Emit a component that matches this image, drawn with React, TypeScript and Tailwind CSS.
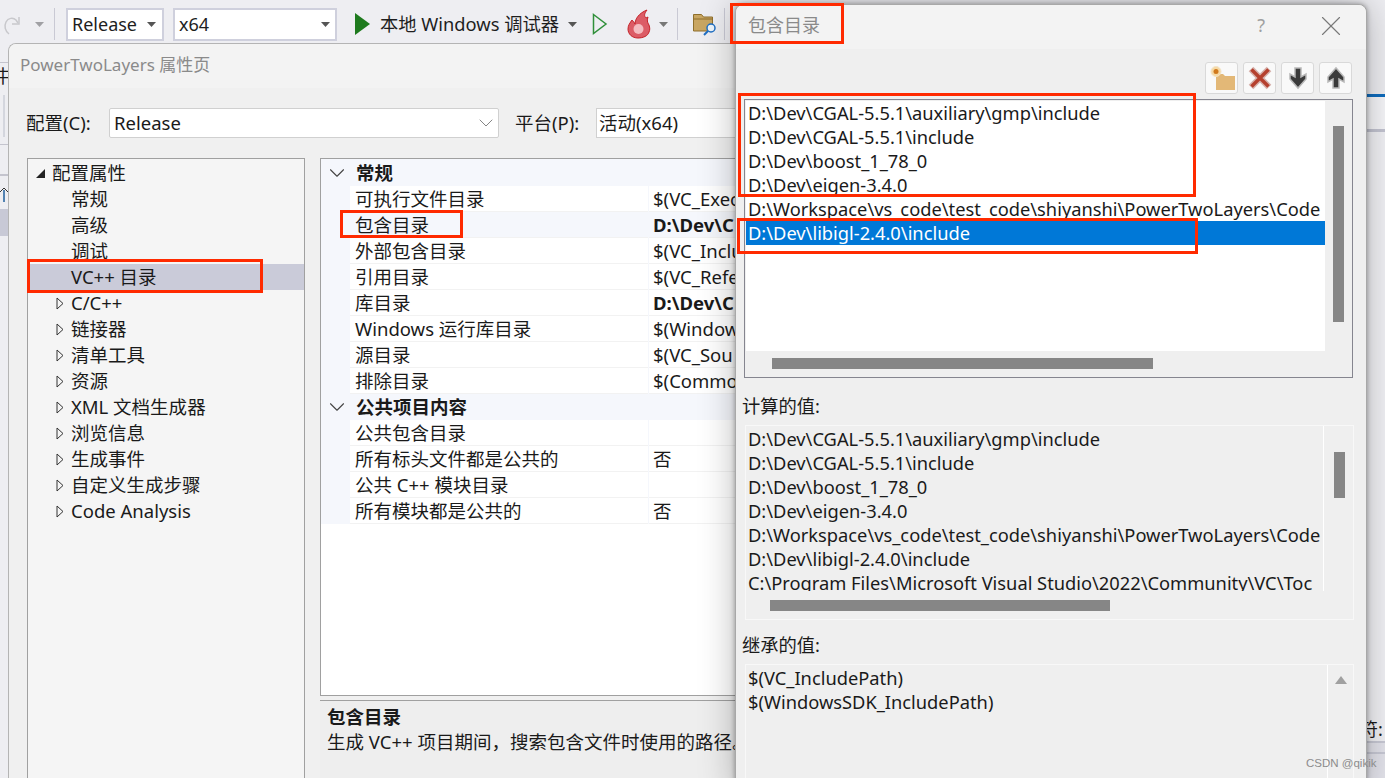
import { ChevronDown, X } from "lucide-react";

const FONT = "font-['Noto_Sans','Noto_Sans_CJK_SC',sans-serif]";

const treeItems = [
  { label: "配置属性", open: true },
  { label: "常规" },
  { label: "高级" },
  { label: "调试" },
  { label: "VC++ 目录", active: true },
  { label: "C/C++", closed: true },
  { label: "链接器", closed: true },
  { label: "清单工具", closed: true },
  { label: "资源", closed: true },
  { label: "XML 文档生成器", closed: true },
  { label: "浏览信息", closed: true },
  { label: "生成事件", closed: true },
  { label: "自定义生成步骤", closed: true },
  { label: "Code Analysis", closed: true },
];

// values are cut off by the dialog on top in the screenshot
const generalRows = [
  { name: "可执行文件目录", value: "$(VC_Exec" },
  { name: "包含目录", value: "D:\\Dev\\C", bold: true, tint: true },
  { name: "外部包含目录", value: "$(VC_Inclu" },
  { name: "引用目录", value: "$(VC_Refe" },
  { name: "库目录", value: "D:\\Dev\\C", bold: true },
  { name: "Windows 运行库目录", value: "$(Window" },
  { name: "源目录", value: "$(VC_Sou" },
  { name: "排除目录", value: "$(Commo" },
];

const publicRows = [
  { name: "公共包含目录", value: "" },
  { name: "所有标头文件都是公共的", value: "否" },
  { name: "公共 C++ 模块目录", value: "" },
  { name: "所有模块都是公共的", value: "否" },
];

const includePaths = [
  "D:\\Dev\\CGAL-5.5.1\\auxiliary\\gmp\\include",
  "D:\\Dev\\CGAL-5.5.1\\include",
  "D:\\Dev\\boost_1_78_0",
  "D:\\Dev\\eigen-3.4.0",
  "D:\\Workspace\\vs_code\\test_code\\shiyanshi\\PowerTwoLayers\\Code",
];

function Caret({ className = "", color = "#555" }: { className?: string; color?: string }) {
  return (
    <svg width="9" height="5" viewBox="0 0 9 5" className={className}>
      <path d="M0 0h9L4.500 5z" fill={color} />
    </svg>
  );
}

function Toolbar() {
  return (
    <div className="flex h-[48px] shrink-0 items-center bg-[#eeeef2] text-[18.3px] text-[#1e1e1e]">
      <svg width="20" height="24" viewBox="0 0 20 24" className="ml-[2px]">
        <path d="M7 22C3 19 2 14 4 10c2-4 7-5 10-2l2 3" fill="none" stroke="#c8c8cc" strokeWidth="1.500" />
        <path d="M17 5v7h-7" fill="none" stroke="#c8c8cc" strokeWidth="1.500" />
      </svg>
      <Caret className="ml-[13px]" color="#a0a0a4" />
      <div className="ml-[10px] h-[32px] w-px bg-[#c9c9d4]" />
      <div className="ml-[11px] flex h-[33px] w-[98px] items-center justify-between border-2 border-[#cfd0dd] bg-white pl-[4px] pr-[6px] text-[18px]">
        Release
        <Caret />
      </div>
      <div className="ml-[9px] flex h-[33px] w-[164px] items-center justify-between border-2 border-[#cfd0dd] bg-white pl-[4px] pr-[5px] text-[18px]">
        x64
        <Caret />
      </div>
      <svg width="18" height="24" viewBox="0 0 18 24" className="ml-[17px]">
        <path d="M1 1l15 11L1 23z" fill="#1e7a1e" />
      </svg>
      <span className="ml-[8px] whitespace-nowrap">本地 Windows 调试器</span>
      <Caret className="ml-[9px]" />
      <svg width="16" height="22" viewBox="0 0 16 22" className="ml-[15px]">
        <path d="M1.500 1.500l12.500 9.500-12.500 9.500z" fill="none" stroke="#2f8f3a" strokeWidth="1.500" />
      </svg>
      <svg width="24" height="30" viewBox="0 0 24 30" className="ml-[19px]">
        <path d="M11 29C5 29 1 25 1 20c0-4 2-6 4-9 1 1 2 2 3 4 0-5 4-11 12-14-3 4-3 6-1 8l2-1c-1 3-1 5 1 8 1 3 1 5 0 7-1 4-6 6-11 6z" fill="#dc5c66" stroke="#c42228" />
        <circle cx="11.500" cy="20" r="5" fill="#f4bcc0" />
      </svg>
      <Caret className="ml-[8px]" color="#777" />
      <div className="ml-[9px] h-[32px] w-px bg-[#c9c9d4]" />
      <svg width="26" height="26" viewBox="0 0 26 26" className="ml-[14px]">
        <path d="M1.500 3.500h8l2 2.500h9v14h-19z" fill="#c9a662" stroke="#8f6f2c" />
        <path d="M2 8h18" stroke="#8f6f2c" />
        <circle cx="19" cy="17" r="4" fill="#eef5fb" stroke="#1f6fc4" strokeWidth="1.500" />
        <path d="M16 20l-4 4" stroke="#1f6fc4" strokeWidth="2" />
      </svg>
      <div className="ml-[6px] h-[32px] w-px bg-[#c9c9d4]" />
    </div>
  );
}

// what shows of the IDE on both sides of the two windows
function IdeBackground() {
  return (
    <div className="flex flex-1 justify-between overflow-hidden">
      <div className="flex w-[8px] flex-col bg-[#eeeef2]">
        <div className="mt-[14px] h-px bg-[#c4c4ce]" />
        <div className="h-[26px] pt-[1px] text-[18px] leading-[24px] text-[#1a1a1a]">
          <div className="-ml-[6px] whitespace-nowrap">中</div>
        </div>
        <div className="mt-[6px] ml-[3px] h-[42px] w-[2px] bg-[#d4d6de]" />
        <div className="mt-[7px] h-px bg-[#c4c4ce]" />
        <div className="h-[29px]" />
        <div className="h-[2px] bg-[#c4c4ce]" />
        <svg width="8" height="25" viewBox="0 0 8 25" className="mt-[8px]">
          <path d="M0 8l4-4 4 4" fill="none" stroke="#333" />
          <path d="M4 6v12" stroke="#1f5f9c" strokeWidth="1.500" />
        </svg>
        <div className="h-[27px] bg-[#c8c9d6]" />
      </div>
      <div className="flex w-[19px] flex-col bg-[#f2f2f6]">
        <div className="h-[46px] bg-[#eeeef2]" />
        <div className="h-[3px] bg-[#0f6cbd]" />
        <div className="h-[32px] bg-[#f7f7fa]" />
        <div className="h-[3px] bg-[#c4c5d2]" />
        <div className="h-[585px]" />
        <div className="-ml-[6px] h-[24px] whitespace-nowrap text-[18px] leading-[24px] text-[#1a1a1a]">符:</div>
        <div className="h-[2px] bg-[#c9cad6]" />
        <div className="h-[9px] bg-[#e4e4ec]" />
        <div className="h-[2px] bg-[#c9cad6]" />
        <div className="flex-1 bg-[#e4e4ec]" />
      </div>
    </div>
  );
}

function PropRow({ name, value, bold, tint }: { name: string; value: string; bold?: boolean; tint?: boolean }) {
  return (
    <div className="flex h-[26px] bg-[#f5f7fc]">
      <div className={`ml-[29px] flex w-[298px] shrink-0 items-center whitespace-nowrap border-b border-[#f2f2f2] pl-[5px] ${tint ? "bg-[#f5f7fc]" : "bg-white"}`}>
        {name}
      </div>
      <div className={`ml-px flex flex-1 items-center overflow-hidden whitespace-nowrap border-b border-[#f2f2f2] pl-[4px] ${bold ? "font-bold" : ""} ${tint ? "bg-[#f5f7fc]" : "bg-white"}`}>
        {value}
      </div>
    </div>
  );
}

function GroupRow({ label, first }: { label: string; first?: boolean }) {
  return (
    <div className={`flex items-center bg-[#f5f7fc] font-bold ${first ? "h-[27px]" : "h-[26px]"}`}>
      <ChevronDown className="ml-[3px] h-[26px] w-[26px] text-[#444]" strokeWidth={1} />
      <span className="ml-[6px]">{label}</span>
    </div>
  );
}

function PropertyWindow() {
  return (
    <div className="absolute left-[8px] top-[43px] h-[760px] w-[727px] overflow-hidden rounded-tl-lg border border-r-0 border-[#b4b4b4] bg-[#f0f0f0] text-[18.5px] text-[#1a1a1a]">
      <div className="flex h-[44px] items-center bg-[#f3f3f3] pb-[3px] pl-[11px] text-[17px] text-[#8a8a8a]">
        PowerTwoLayers 属性页
      </div>
      <div className="flex items-center pl-[17px] pt-[20px]">
        <span className="w-[83px] whitespace-nowrap">配置(C):</span>
        <div className="flex h-[30px] w-[390px] items-center justify-between rounded-[2px] border border-[#d0d0d0] bg-white pl-[4px]">
          Release
          <ChevronDown className="h-[24px] w-[24px] text-[#666]" strokeWidth={0.8} />
        </div>
        <span className="ml-[16px] w-[81px] whitespace-nowrap">平台(P):</span>
        <div className="flex h-[30px] flex-1 items-center border border-r-0 border-[#d0d0d0] bg-white pl-[2px]">
          活动(x64)
        </div>
      </div>
      <div className="mt-[20px] flex gap-[15px] pl-[18px]">
        <div className="h-[640px] w-[278px] shrink-0 border border-[#a0a0a0] bg-[#f5f5f5] pt-px">
          {treeItems.map((item) => (
            <div
              key={item.label}
              className={`flex h-[26px] items-center whitespace-nowrap ${item.active ? "bg-[#cacbd9]" : ""}`}
            >
              {item.open ? (
                <span className="ml-[7px] w-[17px] shrink-0">
                  <svg width="11" height="11" viewBox="0 0 11 11">
                    <path d="M10 1v9H1z" fill="#222" />
                  </svg>
                </span>
              ) : (
                <span className="ml-[28px] flex w-[15px] shrink-0 items-center">
                  {item.closed && (
                    <svg width="8" height="13" viewBox="0 0 8 13">
                      <path d="M1 1l6 5.500-6 5.500z" fill="none" stroke="#333" />
                    </svg>
                  )}
                </span>
              )}
              <span>{item.label}</span>
            </div>
          ))}
        </div>
        <div className="min-w-0 flex-1">
          <div className="h-[538px] border border-r-0 border-[#a0a0a0] bg-white">
            <GroupRow label="常规" first />
            {generalRows.map((row) => (
              <PropRow key={row.name} {...row} />
            ))}
            <GroupRow label="公共项目内容" />
            {publicRows.map((row) => (
              <PropRow key={row.name} {...row} />
            ))}
          </div>
          <div className="mt-[4px] h-[90px] border-t border-[#a0a0a0] bg-[#eeeeee] pl-[7px]">
            <div className="pt-[3px] font-bold leading-[26px]">包含目录</div>
            <div className="whitespace-nowrap leading-[24px]">生成 VC++ 项目期间，搜索包含文件时使用的路径。</div>
          </div>
        </div>
      </div>
    </div>
  );
}

function SquareButton({ children }: { children: React.ReactNode }) {
  return (
    <div className="flex h-[32px] w-[33px] items-center justify-center rounded-[3px] border border-[#d9d9d9] bg-[#f9f9f9]">
      {children}
    </div>
  );
}

function IncludeDialog() {
  return (
    <div className="absolute left-[735px] top-[4px] flex h-[790px] w-[632px] flex-col rounded-lg border border-[#a8a8a8] bg-[#efefef] text-[18.3px] text-[#1a1a1a] shadow-[0_0_36px_rgba(0,0,0,0.28),0_0_5px_rgba(0,0,0,0.35)]">
      <div className="flex h-[44px] shrink-0 items-center rounded-t-lg bg-[#f3f3f3] pb-[3px] pl-[12px] pr-[18px] text-[18px] text-[#8a8a8a]">
        <span>包含目录</span>
        <span className="ml-auto text-[#a0a0a0]">?</span>
        <X className="ml-[49px] h-[34px] w-[34px] text-[#777]" strokeWidth={0.8} />
      </div>
      <div className="flex justify-end gap-[5px] pr-[14px] pt-[13px]">
        <SquareButton>
          <svg width="28" height="26" viewBox="0 0 28 26">
            <path d="M8 9h7l2 2h10v14H8z" fill="#e3b877" />
            <circle cx="8" cy="6.500" r="5" fill="#f6d9a4" stroke="#f3e4c8" />
            <circle cx="8" cy="6.500" r="2.500" fill="#d0791c" />
          </svg>
        </SquareButton>
        <SquareButton>
          <svg width="26" height="26" viewBox="0 0 26 26">
            <path d="M4 4l18 18M22 4L4 22" stroke="#d6b0aa" strokeWidth="6.500" />
            <path d="M4.500 4.500l17 17M21.500 4.500l-17 17" stroke="#b5402e" strokeWidth="3.500" />
          </svg>
        </SquareButton>
        <SquareButton>
          <svg width="20" height="26" viewBox="0 0 20 26">
            <path d="M7 3h6v9l5-3v5l-8 9-8-9V9l5 3z" fill="#3a3a3a" stroke="#b8b8b8" strokeWidth="1.500" />
          </svg>
        </SquareButton>
        <SquareButton>
          <svg width="20" height="26" viewBox="0 0 20 26">
            <path d="M7 23h6v-9l5 3v-5l-8-9-8 9v5l5-3z" fill="#3a3a3a" stroke="#b8b8b8" strokeWidth="1.500" />
          </svg>
        </SquareButton>
      </div>
      <div className="ml-[8px] mt-[5px] h-[279px] w-[609px] shrink-0 border border-[#85858f] bg-[#efefef] p-px">
        <div className="flex">
          <div className="h-[250px] w-[579px] overflow-hidden bg-white leading-[24px]">
            {includePaths.map((path) => (
              <div key={path} className="h-[24px] whitespace-nowrap pl-[2px]">{path}</div>
            ))}
            <div className="h-[24px] bg-[#0078d7] pl-[2px] text-white">D:\Dev\libigl-2.4.0\include</div>
          </div>
          <div className="ml-[8px] mt-[25px] h-[196px] w-[11px] bg-[#868686]" />
        </div>
        <div className="ml-[26px] mt-[7px] h-[11px] w-[381px] bg-[#868686]" />
      </div>
      <div className="ml-[6px] mt-[15px] leading-[26px]">计算的值:</div>
      <div className="ml-[9px] mt-[6px] h-[195px] w-[609px] shrink-0 border border-[#f8f8f8]">
        <div className="flex h-[165px]">
          <div className="w-[578px] overflow-hidden whitespace-nowrap border-r border-white pl-[2px] pt-px leading-[24px]">
            {includePaths.map((path) => (
              <div key={path} className="h-[24px]">{path}</div>
            ))}
            <div className="h-[24px]">D:\Dev\libigl-2.4.0\include</div>
            <div className="h-[24px]">C:\Program Files\Microsoft Visual Studio\2022\Community\VC\Toc</div>
          </div>
          <div className="ml-[10px] mt-[26px] h-[46px] w-[11px] bg-[#868686]" />
        </div>
        <div className="ml-[24px] mt-[9px] h-[11px] w-[340px] bg-[#868686]" />
      </div>
      <div className="ml-[6px] mt-[12px] leading-[26px]">继承的值:</div>
      <div className="ml-[9px] mt-[6px] flex h-[130px] w-[609px] shrink-0 border border-[#f8f8f8]">
        <div className="w-[582px] border-r border-white pl-[2px] pt-px leading-[24px]">
          <div>$(VC_IncludePath)</div>
          <div>$(WindowsSDK_IncludePath)</div>
        </div>
        <svg width="12" height="9" viewBox="0 0 12 9" className="ml-[7px] mt-[10px]">
          <path d="M0 9l6-8 6 8z" fill="#a0a0a0" />
        </svg>
      </div>
    </div>
  );
}

// red marks drawn over the screenshot
const marks = [
  "left-[730px] top-[3px] h-[41px] w-[114px]",
  "left-[738px] top-[93px] h-[104px] w-[458px]",
  "left-[737px] top-[218px] h-[36px] w-[461px]",
  "left-[340px] top-[210px] h-[28px] w-[123px]",
  "left-[27px] top-[259px] h-[34px] w-[236px]",
];

export default function App() {
  return (
    <div className={`relative flex h-[778px] w-[1385px] flex-col overflow-hidden bg-[#eeeef2] ${FONT}`}>
      <Toolbar />
      <IdeBackground />
      <PropertyWindow />
      <IncludeDialog />
      {marks.map((m) => (
        <div key={m} className={`absolute border-[3px] border-[#ff2a00] ${m}`} />
      ))}
      <div className="absolute left-[1306px] top-[755px] font-['Liberation_Sans',sans-serif] text-[11.5px] leading-[16px] text-[#8c8c8c]">
        CSDN @qikik
      </div>
    </div>
  );
}
